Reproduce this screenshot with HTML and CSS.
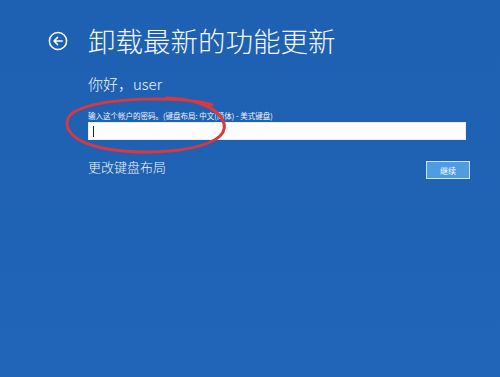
FILE: index.html
```html
<!DOCTYPE html>
<html lang="zh">
<head>
<meta charset="utf-8">
<link rel="stylesheet" href="styles.css">
</head>
<body>
<div class="screen">
  <header class="header">
    <svg class="back" width="20" height="20" viewBox="0 0 20 20">
      <circle cx="10" cy="10" r="8.6" fill="none" stroke="#fff" stroke-width="1.5"/>
      <path d="M14.2 10H6.2M9.6 6.4L6 10l3.6 3.6" fill="none" stroke="#fff" stroke-width="1.5" stroke-linecap="round" stroke-linejoin="round"/>
    </svg>
    <h1 class="title">卸载最新的功能更新</h1>
  </header>
  <main class="content">
    <p class="greeting">你好，user</p>
    <label class="hint">输入这个帐户的密码。(键盘布局: 中文(简体) - 美式键盘)</label>
    <div class="input"><span class="caret"></span></div>
    <div class="row">
      <a class="link">更改键盘布局</a>
      <button class="btn">继续</button>
    </div>
  </main>
  <svg class="annot" width="170" height="64" viewBox="0 0 170 64">
    <path d="M150 11 C125 2 40 2 12 18 C-2 28 4 46 40 54 C80 62 140 58 158 42 C168 32 160 18 140 10 C128 6 116 4 104 4" fill="none" stroke="#d9383f" stroke-width="3" stroke-linecap="round"/>
  </svg>
</div>
</body>
</html>
```
FILE: styles.css
```css
* { box-sizing: border-box; }
html, body { margin: 0; padding: 0; }
body {
  width: 500px;
  height: 377px;
  overflow: hidden;
  background: linear-gradient(180deg, #1e60b1 0%, #2065b8 100%);
  font-family: "Noto Sans CJK SC", "Noto Sans", sans-serif;
  color: #fff;
}
.screen {
  position: relative;
  width: 500px;
  height: 377px;
  padding: 24px 0 0 48px;
}
.header {
  display: flex;
  align-items: center;
  gap: 20px;
  height: 32px;
}
.back { flex: none; margin-top: 1px; }
.title {
  margin: 0;
  font-size: 27.5px;
  font-weight: 300;
  line-height: 32px;
  color: #f4f8fc;
}
.content {
  padding: 18px 34px 0 40px;
  display: flex;
  flex-direction: column;
}
.greeting {
  margin: 0;
  font-size: 15px;
  line-height: 20px;
  font-weight: 300;
  color: #eef4fb;
}
.hint {
  margin-top: 17px;
  font-size: 7.5px;
  line-height: 10px;
  color: #f0f5fb;
}
.input {
  margin-top: 1px;
  height: 18px;
  background: #fdfdfd;
  border: 1px solid #e8eef6;
  display: flex;
  align-items: center;
  padding-left: 4px;
}
.caret {
  width: 1px;
  height: 11px;
  background: #222;
}
.row {
  margin-top: 18px;
  display: flex;
  justify-content: space-between;
  align-items: flex-start;
}
.link {
  font-size: 13px;
  line-height: 18px;
  font-weight: 300;
  color: #eef4fb;
}
.btn {
  width: 44px;
  height: 18px;
  margin-right: -4px;
  margin-top: 3px;
  padding: 0;
  font-family: inherit;
  font-size: 8px;
  color: #fff;
  background: #4f9ce0;
  border: 1px solid #cfe4f7;
}
.annot {
  position: absolute;
  left: 62px;
  top: 94px;
}
```
